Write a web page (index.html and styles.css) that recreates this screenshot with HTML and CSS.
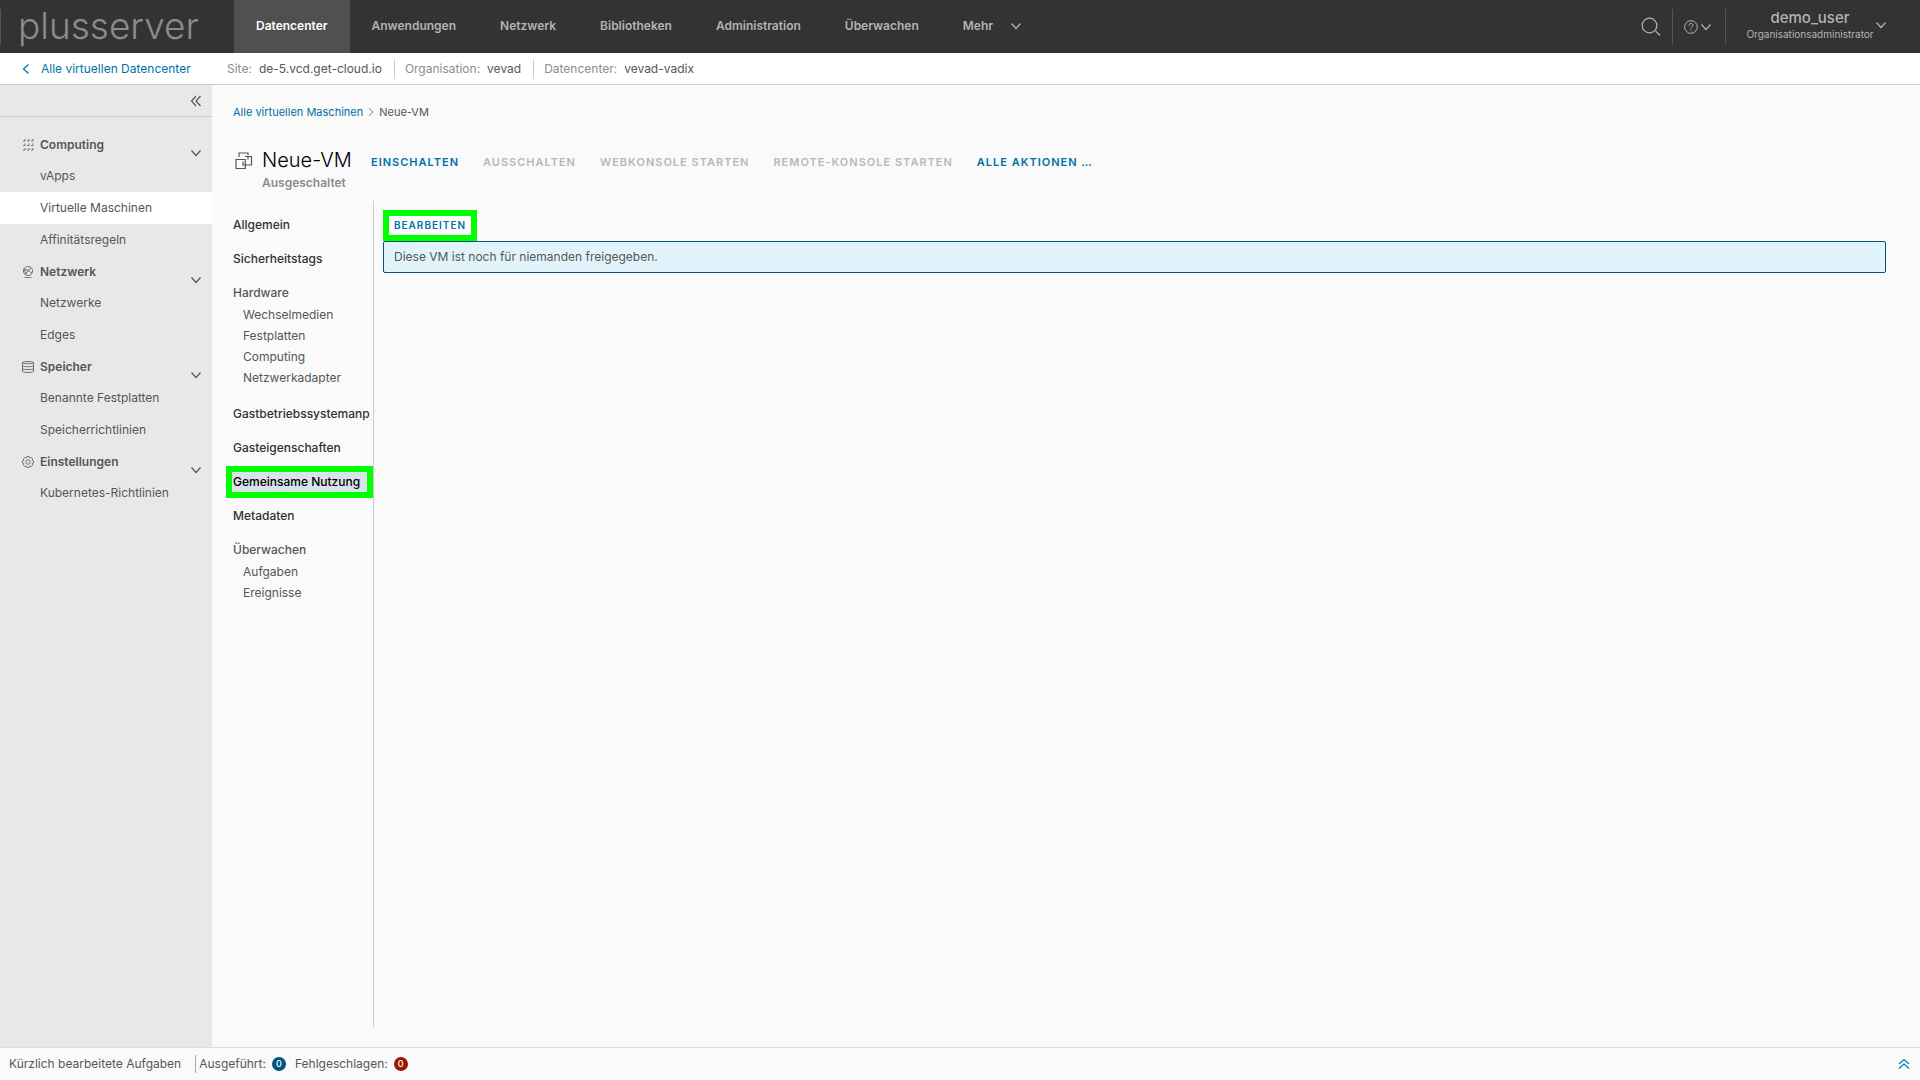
FILE: index.html
```html
<!DOCTYPE html>
<html lang="de">
<head>
<meta charset="utf-8">
<title>Neue-VM – Gemeinsame Nutzung</title>
<link rel="stylesheet" href="styles.css">
</head>
<body>
<svg class="defs" aria-hidden="true">
  <symbol id="chevron" viewBox="0 0 12 12"><path d="M1.5 3.5 6 8.5l4.500-5" /></symbol>
  <symbol id="double" viewBox="0 0 12 12"><path d="M6 1 1.500 6 6 11M10.500 1 6 6l4.500 5" /></symbol>
</svg>
<header class="topbar">
  <a class="logo" href="#">plusserver</a>
  <nav class="mainnav">
    <a class="current" href="#">Datencenter</a>
    <a href="#">Anwendungen</a>
    <a href="#">Netzwerk</a>
    <a href="#">Bibliotheken</a>
    <a href="#">Administration</a>
    <a href="#">Überwachen</a>
    <button type="button">Mehr <svg class="chev"><use href="#chevron"/></svg></button>
  </nav>
  <button class="search" type="button" aria-label="Suchen"><svg class="searchicon" viewBox="0 0 20 20"><circle cx="8.500" cy="8.500" r="7.300"/><path d="m14.500 14 4.500 4.500"/></svg></button>
  <button class="help" type="button" aria-label="Hilfe"><svg class="helpicon" viewBox="0 0 14 14"><circle cx="7" cy="7" r="6.300"/><path d="M5 5.600c0-3 4-2.700 4-.4 0 1.500-2 1.400-2 3.200M7 9.700v1"/></svg><svg class="chev"><use href="#chevron"/></svg></button>
  <button class="user" type="button"><span class="who"><span class="name">demo_user</span><span class="role">Organisationsadministrator</span></span><svg class="chev"><use href="#chevron"/></svg></button>
</header>
<div class="context">
  <a class="back" href="#"><svg class="chev left"><use href="#chevron"/></svg>Alle virtuellen Datencenter</a>
  <dl class="facts">
    <div><dt>Site:</dt><dd>de-5.vcd.get-cloud.io</dd></div>
    <div><dt>Organisation:</dt><dd>vevad</dd></div>
    <div><dt>Datencenter:</dt><dd>vevad-vadix</dd></div>
  </dl>
</div>
<div class="workspace">
  <aside class="sidebar">
    <div class="collapse"><button type="button" aria-label="Einklappen"><svg class="chev"><use href="#double"/></svg></button></div>
    <nav class="sidenav">
      <button class="group" type="button"><svg class="gicon dots" viewBox="0 0 12 12"><path d="M1 2h2V0M5 2h2V0M9 2h2V0M1 6.500h2v-2M5 6.500h2v-2M9 6.500h2v-2M1 11h2V9M5 11h2V9M9 11h2V9"/></svg>Computing<svg class="chev"><use href="#chevron"/></svg></button>
      <a href="#">vApps</a>
      <a class="current" href="#">Virtuelle Maschinen</a>
      <a href="#">Affinitätsregeln</a>
      <button class="group" type="button"><svg class="gicon" viewBox="0 0 12 12"><circle cx="6" cy="5" r="4.600"/><path d="M2 3 6 4.500 9 2M6 4.500 10 7M2.500 11.600h7M2 3l2 5 2-3.500"/></svg>Netzwerk<svg class="chev"><use href="#chevron"/></svg></button>
      <a href="#">Netzwerke</a>
      <a href="#">Edges</a>
      <button class="group" type="button"><svg class="gicon" viewBox="0 0 12 12"><path d="M.5 1.500c0-1.300 11-1.300 11 0v9c0 1.300-11 1.300-11 0zM.5 1.800c1 1.200 10 1.200 11 0M.5 4.800c1 1.200 10 1.200 11 0M.5 7.700c1 1.200 10 1.200 11 0"/></svg>Speicher<svg class="chev"><use href="#chevron"/></svg></button>
      <a href="#">Benannte Festplatten</a>
      <a href="#">Speicherrichtlinien</a>
      <button class="group" type="button"><svg class="gicon" viewBox="0 0 12 12"><circle cx="6" cy="6" r="2.200"/><path d="m5 .5 2 0 .5 1.300L9 1.300 10.600 2.900 10.100 4.400 11.500 5v2l-1.400.6.5 1.500L9 10.700l-1.500-.5L7 11.500H5l-.5-1.300-1.500.5L1.400 9.100l.5-1.500L.5 7V5l1.400-.6-.5-1.500L3 1.300l1.500.5z"/></svg>Einstellungen<svg class="chev"><use href="#chevron"/></svg></button>
      <a href="#">Kubernetes-Richtlinien</a>
    </nav>
  </aside>
  <main class="main">
    <nav class="crumbs"><a href="#">Alle virtuellen Maschinen</a><svg class="chev right"><use href="#chevron"/></svg><span>Neue-VM</span></nav>
    <div class="heading">
      <svg class="vmicon" viewBox="0 0 18 18"><path d="M4 5V1h9v2.500M1 7.500h9.300v9H1zM8 9.500V13h8.500V4.500H10M13 4.500v3"/></svg>
      <div class="title"><h1>Neue-VM</h1><p>Ausgeschaltet</p></div>
      <div class="actions">
        <button type="button">Einschalten</button>
        <button type="button" disabled>Ausschalten</button>
        <button type="button" disabled>Webkonsole starten</button>
        <button type="button" disabled>Remote-Konsole starten</button>
        <button type="button">Alle Aktionen …</button>
      </div>
    </div>
    <div class="detail">
      <nav class="tabs">
        <a href="#">Allgemein</a>
        <a href="#">Sicherheitstags</a>
        <h2>Hardware</h2>
        <ul><li><a href="#">Wechselmedien</a></li><li><a href="#">Festplatten</a></li><li><a href="#">Computing</a></li><li><a href="#">Netzwerkadapter</a></li></ul>
        <a href="#">Gastbetriebssystemanp</a>
        <a href="#">Gasteigenschaften</a>
        <a class="current" href="#">Gemeinsame Nutzung</a>
        <a href="#">Metadaten</a>
        <h2>Überwachen</h2>
        <ul><li><a href="#">Aufgaben</a></li><li><a href="#">Ereignisse</a></li></ul>
      </nav>
      <section class="pane">
        <button class="edit" type="button">Bearbeiten</button>
        <p class="alert">Diese VM ist noch für niemanden freigegeben.</p>
      </section>
    </div>
  </main>
</div>
<footer class="tasks">
  <span class="recent">Kürzlich bearbeitete Aufgaben</span>
  <span class="count">Ausgeführt:<b>0</b></span>
  <span class="count failed">Fehlgeschlagen:<b>0</b></span>
  <button type="button" aria-label="Aufgaben anzeigen"><svg class="chev up"><use href="#double"/></svg></button>
</footer>
</body>
</html>
```
FILE: styles.css
```css
* { box-sizing: border-box; }
body {
  margin: 0;
  min-height: 100vh;
  display: flex;
  flex-direction: column;
  background: #fafafa;
  color: #565656;
  font: 400 12px/20px Inter, "Open Sans", sans-serif;
}
a { color: inherit; text-decoration: none; }
button { margin: 0; padding: 0; border: 0; background: none; color: inherit; font: inherit; }
h1, h2, p, ul, dl, dd { margin: 0; padding: 0; font: inherit; }
ul { list-style: none; }
svg { flex: none; fill: none; stroke: currentColor; }
.defs { position: absolute; width: 0; height: 0; }
.chev { width: 12px; height: 12px; stroke-width: 1.2; }
.left { transform: rotate(90deg); }
.right { transform: rotate(-90deg); }
.up { transform: rotate(90deg); }

.topbar { display: flex; align-items: center; height: 53px; background: #333; color: #b3b3b3; }
.logo {
  width: 234px;
  height: 35px;
  padding-left: 17px;
  border-left: 1px solid #555;
  color: #8c8c8c;
  font-size: 37px;
  font-weight: 300;
  line-height: 34px;
}
.mainnav { display: flex; align-self: stretch; flex: 1; font-size: 12px; font-weight: 600; }
.mainnav > * { display: flex; align-items: center; padding: 0 22px 2px; white-space: nowrap; }
.mainnav button { gap: 17px; }
.mainnav .current { background: #505050; color: #fff; }
.search, .help, .user { display: flex; align-items: center; height: 35px; }
.search { padding: 0 11px; }
.searchicon { width: 20px; height: 20px; stroke-width: 1.2; }
.help { width: 53px; padding-left: 11px; gap: 2px; border-left: 1px solid #565656; }
.helpicon { width: 14px; height: 14px; stroke-width: 1; }
.user { padding: 0 33px 3px 19px; border-left: 1px solid #565656; }
.who { display: flex; flex-direction: column; align-items: center; width: 130px; }
.name { font-size: 15px; font-weight: 500; line-height: 18px; }
.role { font-size: 10px; line-height: 14px; }

.context { display: flex; align-items: center; height: 32px; border-bottom: 1px solid #ccc; background: #fff; }
.back { display: flex; align-items: center; gap: 9px; width: 227px; padding-left: 20px; color: #0072a3; white-space: nowrap; }
.facts { display: flex; }
.facts div { display: flex; gap: 7px; padding-right: 12px; margin-right: 10px; border-right: 1px solid #ccc; }
.facts div:last-child { border: 0; }
.facts dt { color: #8c8c8c; }

.workspace { display: flex; flex: 1; }
.sidebar { width: 212px; background: #e8e8e8; }
.collapse { display: flex; justify-content: flex-end; padding: 10px; height: 32px; border-bottom: 1px solid #ccc; }
.collapse button { display: flex; }
.sidenav { display: flex; flex-direction: column; padding-top: 12px; }
.sidenav a { padding-left: 40px; line-height: 32px; }
.sidenav .current { background: #fff; }
.group { display: flex; align-items: center; gap: 6px; height: 31px; padding: 0 10px 0 22px; font-weight: 600; }
.group .chev { margin: 17px 0 0 auto; }
.gicon { width: 12px; height: 12px; stroke-width: .8; }

.main { display: flex; flex: 1; flex-direction: column; min-width: 0; padding: 17px 34px 20px 14px; }
.crumbs { display: flex; align-items: center; gap: 3px; padding-left: 7px; font-size: 11px; }
.crumbs a { color: #0072a3; }
.crumbs .chev { width: 10px; height: 10px; color: #8c8c8c; }
.heading { display: flex; padding: 26px 0 9px 9px; }
.vmicon { width: 18px; height: 18px; margin: 4px 9px 0 0; stroke-width: 1.2; }
.title { width: 109px; }
.title h1 { color: #000; font-size: 20px; font-weight: 300; line-height: 25px; }
.title p { color: #8c8c8c; font-weight: 600; line-height: 19px; }
.actions { display: flex; gap: 24px; height: 28px; color: #0072a3; font-size: 11px; font-weight: 600; }
.actions button, .edit { text-transform: uppercase; letter-spacing: 1px; }
.actions button:disabled { color: #b8b8b8; }
.detail { display: flex; flex: 1; }
.tabs { width: 148px; padding: 8px 0 0; overflow: hidden; border-right: 1px solid #ccc; }
.tabs > a { display: block; margin: 0 0 2px; border: 6px solid transparent; padding: 0 1px; color: #313131; font-weight: 500; white-space: nowrap; }
.tabs .current { border-color: #0f0; background: #d9e4ea; color: #000; }
.tabs h2 { padding: 6px 7px 0; font-weight: 500; }
.tabs ul { padding: 1px 17px 10px; }
.tabs li { line-height: 21px; }
.pane { flex: 1; padding: 9px 0 0 9px; }
.edit { display: block; width: 94px; height: 31px; border: 6px solid #0f0; background: #fff; color: #0072a3; font-size: 10px; font-weight: 600; line-height: 19px; }
.alert { padding: 5px 10px; border: 1px solid #00567a; border-radius: 2px; background: #e1f4fb; font-size: 12px; }

.tasks { display: flex; align-items: center; height: 33px; padding: 0 10px 0 9px; border-top: 1px solid #ddd; }
.recent { margin-right: 3px; padding-right: 14px; border-right: 1px solid #aaa; line-height: 18px; }
.count { display: flex; align-items: center; gap: 6px; margin-right: 9px; }
.count b { width: 14px; height: 14px; border-radius: 7px; background: #00567a; color: #fff; font-size: 9px; font-weight: 500; line-height: 14px; text-align: center; }
.failed b { background: #991700; }
.tasks button { display: flex; margin-left: auto; color: #0079b8; }
```
